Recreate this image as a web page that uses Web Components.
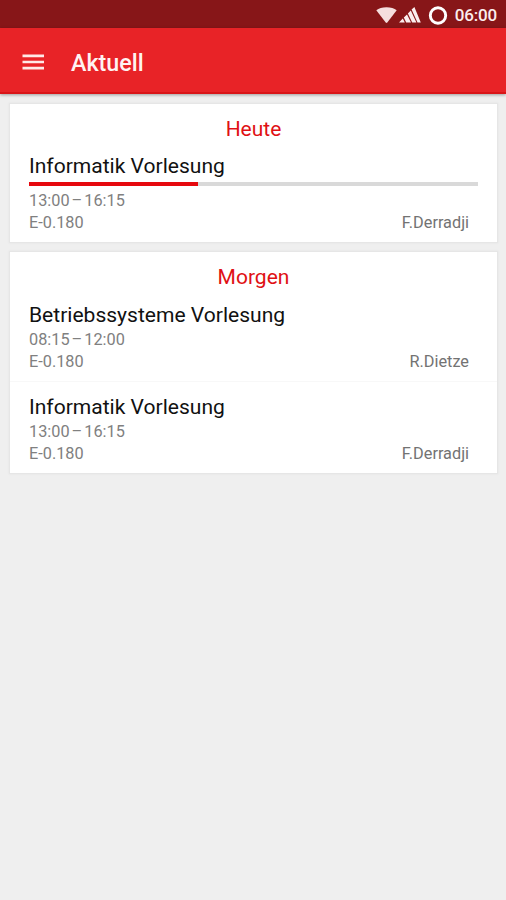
<!DOCTYPE html>
<html lang="de">
<head>
<meta charset="utf-8">
<title>Aktuell</title>
<style>
  html, body {
    margin: 0;
    height: 100%;
    background: #efefef;
    font-family: Roboto, sans-serif;
    overflow: hidden;
  }
</style>
</head>
<body>
<schedule-app>
  <status-bar slot="top" time="06:00"></status-bar>
  <app-bar slot="top">Aktuell</app-bar>
  <day-card heading="Heute">
    <lecture-item time="13:00 – 16:15" room="E-0.180" lecturer="F.Derradji" progress="37.6">Informatik Vorlesung</lecture-item>
  </day-card>
  <day-card heading="Morgen">
    <lecture-item time="08:15 – 12:00" room="E-0.180" lecturer="R.Dietze">Betriebssysteme Vorlesung</lecture-item>
    <lecture-item time="13:00 – 16:15" room="E-0.180" lecturer="F.Derradji">Informatik Vorlesung</lecture-item>
  </day-card>
</schedule-app>

<script>
(function () {
  function define(name, html, setup) {
    const template = document.createElement("template");
    template.innerHTML = html;

    customElements.define(name, class extends HTMLElement {
      constructor() {
        super();
        this.attachShadow({ mode: "open" });
        this.shadowRoot.appendChild(template.content.cloneNode(true));
      }

      connectedCallback() {
        if (setup) setup(this, this.shadowRoot);
      }
    });
  }

  define("schedule-app", `
    <style>
      :host {
        display: flex;
        flex-direction: column;
        height: 100%;
      }
      main {
        display: flex;
        flex-direction: column;
        gap: 10px;
        padding: 10px 9px 0 10px;
      }
    </style>
    <slot name="top"></slot>
    <main><slot></slot></main>
  `);

  define("status-bar", `
    <style>
      :host {
        display: flex;
        align-items: center;
        justify-content: flex-end;
        box-sizing: border-box;
        height: 28px;
        padding: 2px 9px 0 0;
        background: #871618;
        color: #fbeeee;
      }
      svg { display: block; }
      .signal { margin-left: 2px; }
      .ring { margin-left: 7px; }
      .time {
        margin-left: 7px;
        font-size: 17px;
        line-height: 26px;
        font-weight: 500;
        letter-spacing: -0.2px;
      }
    </style>
    <svg class="wifi" width="21" height="18" viewBox="0 0 21 18">
      <path d="M0.3 4.2Q4 1.2 10.5 1.2T20.7 4.2L11.3 16.6Q10.5 17.5 9.7 16.6Z" fill="#f5dede"/>
    </svg>
    <svg class="signal" width="22" height="18" viewBox="0 0 22 18">
      <path d="M0 16.6L3.8 12.6L5.8 16.6ZM4.8 11.6L8 8.4L12 16.6H7.2ZM8.9 7.4L11.8 4.5L17.4 16.6H13.2ZM12.6 3.6L15.4 1L21.8 16.6H18.5Z" fill="#fbeeee"/>
    </svg>
    <svg class="ring" width="20" height="19" viewBox="0 0 20 19">
      <circle cx="10" cy="9.5" r="7.7" fill="none" stroke="#fff" stroke-width="2.9"/>
    </svg>
    <span class="time"></span>
  `, function (el, root) {
    root.querySelector(".time").textContent = el.getAttribute("time");
  });

  define("app-bar", `
    <style>
      :host {
        display: flex;
        align-items: center;
        box-sizing: border-box;
        height: 66px;
        padding: 4px 22px 0;
        background: #e82327;
        border-bottom: 2px solid #d91518;
        box-shadow: 0 1px 3px rgba(0, 0, 0, 0.35);
        color: #fff3f2;
      }
      svg { display: block; }
      h1 {
        margin: 0 0 0 26px;
        padding-top: 1px;
        font-size: 23.3px;
        line-height: 30px;
        font-weight: 500;
      }
    </style>
    <svg width="23" height="18" viewBox="0 0 23 18">
      <path d="M0.5 2.8H22M0.5 9H22M0.5 15.2H22" stroke="#ffe9e7" stroke-width="2.7"/>
    </svg>
    <h1><slot></slot></h1>
  `);

  define("day-card", `
    <style>
      :host {
        display: block;
        background: #fff;
        box-shadow: 0 0 0 1px #e6e6e6, 0 0 2px 1px #e2e2e2;
      }
      h2 {
        margin: 0;
        padding-top: 12px;
        height: 26px;
        font-size: 21px;
        line-height: 26px;
        font-weight: 400;
        text-align: center;
        color: #e01014;
      }
      ::slotted(lecture-item:not(:last-child)) {
        border-bottom: 1px solid #f8f8f8;
      }
    </style>
    <h2></h2>
    <slot></slot>
  `, function (el, root) {
    root.querySelector("h2").textContent = el.getAttribute("heading");
  });

  define("lecture-item", `
    <style>
      :host {
        display: block;
        padding: 12px 19px 8px;
        color: #808080;
        font-size: 16.3px;
        line-height: 22px;
      }
      :host([progress]) { padding-top: 11px; }
      h3 {
        margin: 0;
        padding-bottom: 1px;
        font-size: 21.05px;
        line-height: 26px;
        font-weight: 400;
        color: #111;
      }
      .track {
        height: 4px;
        margin: 2px 0 4px;
        background: #d9d9d9;
      }
      .bar {
        height: 100%;
        background: #e6080e;
      }
      .track[hidden] { display: none; }
      .time { word-spacing: -2px; }
      .row {
        display: flex;
        justify-content: space-between;
        padding-right: 9px;
      }
      .lecturer { color: #737373; }
    </style>
    <h3><slot></slot></h3>
    <div class="track" hidden><div class="bar"></div></div>
    <div class="time"></div>
    <div class="row"><span class="room"></span><span class="lecturer"></span></div>
  `, function (el, root) {
    for (const key of ["time", "room", "lecturer"]) {
      root.querySelector("." + key).textContent = el.getAttribute(key);
    }
    if (el.hasAttribute("progress")) {
      root.querySelector(".track").hidden = false;
      root.querySelector(".bar").style.width = el.getAttribute("progress") + "%";
    }
  });
})();
</script>
</body>
</html>
